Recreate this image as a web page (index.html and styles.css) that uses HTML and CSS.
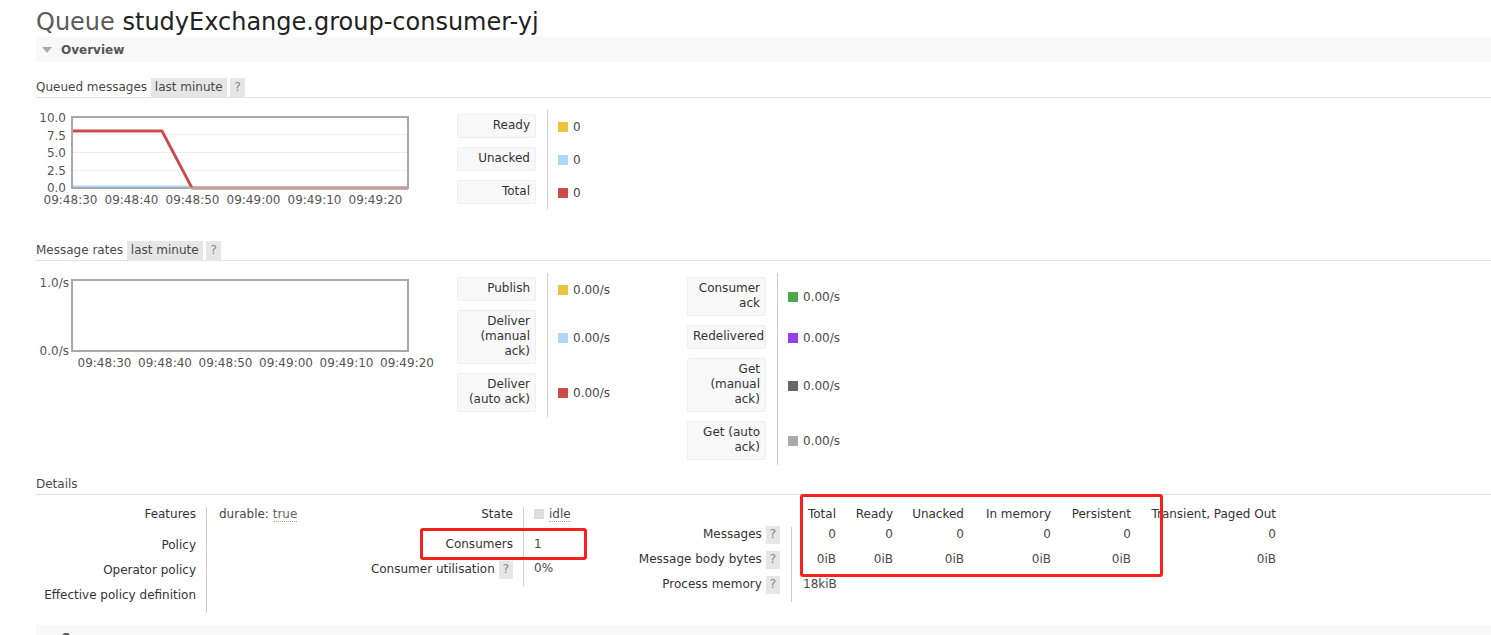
FILE: index.html
```html
<!DOCTYPE html>
<html>
<head>
<meta charset="utf-8">
<title>Queue studyExchange.group-consumer-yj</title>
<link rel="stylesheet" href="styles.css">
</head>
<body>
<div class="page">
  <h1 class="title"><span class="title-kind">Queue</span> <span class="title-name">studyExchange.group-consumer-yj</span></h1>

  <div class="section-bar"><span class="tri"></span><span class="section-name">Overview</span></div>

  <div class="hdr hdr-first">Queued messages <span class="badge">last minute</span> <span class="badge help">?</span></div>
  <div class="chart-row">
    <div class="chart">
      <svg width="421" height="100" viewBox="0 0 421 100">
        <line x1="36" y1="24.75" x2="372" y2="24.75" class="grid"/>
        <line x1="36" y1="42.5" x2="372" y2="42.5" class="grid"/>
        <line x1="36" y1="60.25" x2="372" y2="60.25" class="grid"/>
        <polyline points="36,77 156,77" class="ln-blue"/>
        <polyline points="36,21 126,21 156,78 372,78" class="ln-red"/>
        <rect x="36" y="7" width="336" height="71" class="frame"/>
        <text x="30" y="8" class="ax ax-y">10.0</text>
        <text x="30" y="25.5" class="ax ax-y">7.5</text>
        <text x="30" y="43" class="ax ax-y">5.0</text>
        <text x="30" y="60.5" class="ax ax-y">2.5</text>
        <text x="30" y="78" class="ax ax-y">0.0</text>
        <text x="34.5" y="90" class="ax ax-x">09:48:30</text>
        <text x="95.5" y="90" class="ax ax-x">09:48:40</text>
        <text x="156.5" y="90" class="ax ax-x">09:48:50</text>
        <text x="217.5" y="90" class="ax ax-x">09:49:00</text>
        <text x="278.5" y="90" class="ax ax-x">09:49:10</text>
        <text x="339.5" y="90" class="ax ax-x">09:49:20</text>
      </svg>
    </div>
    <div class="legend">
      <div class="lg-label"><span class="lg-box">Ready</span></div>
      <div class="lg-value"><span class="sw sw-ready"></span>0</div>
      <div class="lg-label"><span class="lg-box">Unacked</span></div>
      <div class="lg-value"><span class="sw sw-unacked"></span>0</div>
      <div class="lg-label"><span class="lg-box">Total</span></div>
      <div class="lg-value"><span class="sw sw-total"></span>0</div>
    </div>
  </div>

  <div class="hdr hdr-rates">Message rates <span class="badge">last minute</span> <span class="badge help">?</span></div>
  <div class="chart-row chart-row-rates">
    <div class="chart">
      <svg width="421" height="100" viewBox="0 0 421 100">
        <rect x="36" y="7" width="336" height="71" class="frame"/>
        <text x="33" y="10" class="ax ax-y">1.0/s</text>
        <text x="33" y="78" class="ax ax-y">0.0/s</text>
        <text x="68.5" y="90" class="ax ax-x">09:48:30</text>
        <text x="129" y="90" class="ax ax-x">09:48:40</text>
        <text x="189.5" y="90" class="ax ax-x">09:48:50</text>
        <text x="250" y="90" class="ax ax-x">09:49:00</text>
        <text x="310.5" y="90" class="ax ax-x">09:49:10</text>
        <text x="371" y="90" class="ax ax-x">09:49:20</text>
      </svg>
    </div>
    <div class="legend legend-rates1">
      <div class="lg-label"><span class="lg-box">Publish</span></div>
      <div class="lg-value"><span class="sw sw-ready"></span>0.00/s</div>
      <div class="lg-label"><span class="lg-box">Deliver<br>(manual<br>ack)</span></div>
      <div class="lg-value"><span class="sw sw-unacked"></span>0.00/s</div>
      <div class="lg-label"><span class="lg-box">Deliver<br>(auto ack)</span></div>
      <div class="lg-value"><span class="sw sw-total"></span>0.00/s</div>
    </div>
    <div class="legend legend-rates2">
      <div class="lg-label"><span class="lg-box">Consumer<br>ack</span></div>
      <div class="lg-value"><span class="sw sw-ack"></span>0.00/s</div>
      <div class="lg-label"><span class="lg-box">Redelivered</span></div>
      <div class="lg-value"><span class="sw sw-redeliver"></span>0.00/s</div>
      <div class="lg-label"><span class="lg-box">Get<br>(manual<br>ack)</span></div>
      <div class="lg-value"><span class="sw sw-getm"></span>0.00/s</div>
      <div class="lg-label"><span class="lg-box">Get (auto<br>ack)</span></div>
      <div class="lg-value"><span class="sw sw-geta"></span>0.00/s</div>
    </div>
  </div>

  <div class="hdr hdr-details">Details</div>
  <div class="details">
    <div class="dt dt1">
      <div class="k r1">Features</div><div class="v r1">durable: <span class="abbr">true</span></div>
      <div class="k r2">Policy</div><div class="v r2"></div>
      <div class="k r2">Operator policy</div><div class="v r2"></div>
      <div class="k r2">Effective policy definition</div><div class="v r2"></div>
    </div>
    <div class="dt dt2">
      <div class="k s1">State</div><div class="v s1"><span class="state-sq"></span><span class="abbr abbr-idle">idle</span></div>
      <div class="k s2">Consumers</div><div class="v s2">1</div>
      <div class="k s3">Consumer utilisation <span class="badge help">?</span></div><div class="v s3">0%</div>
    </div>
    <div class="dt dt3">
      <div class="k h"></div>
      <div class="n h c1">Total</div>
      <div class="n h c2">Ready</div>
      <div class="n h c3">Unacked</div>
      <div class="n h c4">In memory</div>
      <div class="n h c5">Persistent</div>
      <div class="n h c6">Transient, Paged Out</div>

      <div class="k m">Messages <span class="badge help">?</span></div>
      <div class="n m c1 first">0</div>
      <div class="n m c2">0</div>
      <div class="n m c3">0</div>
      <div class="n m c4">0</div>
      <div class="n m c5">0</div>
      <div class="n m c6">0</div>

      <div class="k m">Message body bytes <span class="badge help">?</span></div>
      <div class="n m c1 first">0iB</div>
      <div class="n m c2">0iB</div>
      <div class="n m c3">0iB</div>
      <div class="n m c4">0iB</div>
      <div class="n m c5">0iB</div>
      <div class="n m c6">0iB</div>

      <div class="k m">Process memory <span class="badge help">?</span></div>
      <div class="n m first span-all">18kiB</div>
    </div>
    <div class="mark mark-consumers"></div>
    <div class="mark mark-messages"></div>
  </div>

  <div class="section-bar section-consumers"><span class="tri"></span><span class="section-name">Consumers</span></div>
</div>
</body>
</html>
```
FILE: styles.css
```css
html, body {
  margin: 0;
  padding: 0;
  background: #fff;
  overflow: hidden;
}
body {
  font-family: "DejaVu Sans", Verdana, sans-serif;
  font-size: 12px;
  color: #484848;
  width: 1491px;
  height: 635px;
}
.page {
  padding-left: 36px;
}
.title {
  margin: 0;
  padding-top: 7px;
  height: 30px;
  line-height: 30px;
  font-size: 24px;
  font-weight: normal;
  white-space: nowrap;
}
.title-kind { color: #5a5a5a; }
.title-name { color: #222; }

.section-bar {
  height: 25px;
  background: #f8f8f8;
  display: flex;
  align-items: center;
  padding-left: 6px;
}
.tri {
  width: 0;
  height: 0;
  border-left: 5px solid transparent;
  border-right: 5px solid transparent;
  border-top: 6px solid #aaa;
  margin-right: 9px;
}
.section-name {
  font-weight: bold;
  color: #555;
}
.section-consumers {
  margin-top: 12px;
}

.hdr {
  height: 19px;
  line-height: 19px;
  border-bottom: 1px solid #e2e2e2;
  color: #484848;
  white-space: nowrap;
}
.hdr-first { margin-top: 16px; }
.hdr-rates { margin-top: 31px; }
.hdr-details { margin-top: 10px; }
.badge {
  display: inline-block;
  background: #e6e6e6;
  padding: 0 4px;
  color: #484848;
}
.badge.help {
  color: #888;
  padding: 0 4px;
  line-height: 19px;
}

.chart-row {
  display: flex;
  margin-top: 12px;
}
.chart {
  width: 421px;
  flex: none;
}
.chart svg { display: block; }
.frame {
  fill: none;
  stroke: #a9a9a9;
  stroke-width: 2;
}
.grid {
  stroke: #ececec;
  stroke-width: 1;
}
.ln-red {
  fill: none;
  stroke: #cb4b4b;
  stroke-width: 2.8;
  stroke-linejoin: round;
}
.ln-blue {
  fill: none;
  stroke: #afd8f8;
  stroke-width: 3;
}
.ax {
  font-family: "DejaVu Sans", Verdana, sans-serif;
  font-size: 12px;
  fill: #545454;
  dominant-baseline: central;
}
.ax-y { text-anchor: end; }
.ax-x { text-anchor: middle; }

.legend {
  display: grid;
  grid-template-columns: 79px auto;
  column-gap: 11px;
  align-content: start;
}
.legend-rates1 { width: 230px; }
.lg-label {
  padding: 4px 0 5px;
}
.lg-box {
  display: block;
  box-sizing: border-box;
  background: #f8f8f8;
  border: 1px solid #eee;
  border-radius: 2px;
  padding: 3px 5px 4px;
  line-height: 15px;
  text-align: right;
  color: #333;
}
.lg-value {
  border-left: 1px solid #ccc;
  padding-left: 10px;
  display: flex;
  align-items: center;
  color: #484848;
}
.sw {
  width: 10px;
  height: 10px;
  margin-right: 5px;
  flex: none;
}
.sw-ready { background: #edc240; }
.sw-unacked { background: #afd8f8; }
.sw-total { background: #cb4b4b; }
.sw-ack { background: #4da74d; }
.sw-redeliver { background: #9440ed; }
.sw-getm { background: #666; }
.sw-geta { background: #aaa; }

.details {
  position: relative;
  display: flex;
  margin-top: 12px;
  line-height: 15px;
}
.dt {
  display: grid;
  align-content: start;
}
.dt .k {
  text-align: right;
  padding-right: 10px;
  color: #333;
  white-space: nowrap;
}
.dt .v {
  border-left: 1px solid #ccc;
  white-space: nowrap;
}
.dt1 { grid-template-columns: 170px 124px; }
.dt1 .v { padding-left: 12px; }
.dt1 .r1 { height: 31px; }
.dt1 .r2 { height: 25px; }
.abbr {
  color: #666;
  border-bottom: 1px dotted #aaa;
}
.dt2 { grid-template-columns: 193px 77px; }
.dt2 .v { padding-left: 10px; }
.dt2 .s1 { height: 30px; }
.dt2 .s2 { height: 24px; }
.dt2 .s3 { height: 25px; }
.state-sq {
  display: inline-block;
  width: 10px;
  height: 10px;
  background: #ddd;
  margin-right: 5px;
  vertical-align: -1px;
}
.abbr-idle { color: #484848; }
.dt .badge.help { line-height: 15px; padding: 1px 4px 2px; }

.dt3 { grid-template-columns: 191px 45px 57px 71px 87px 80px 145px; }
.dt3 .k { padding-right: 11px; }
.dt3 .h { height: 20px; }
.dt3 .m { height: 25px; }
.dt3 .m.k { margin-top: -1px; }
.dt3 .n {
  text-align: right;
  white-space: nowrap;
  box-sizing: border-box;
  color: #484848;
}
.dt3 .h.n { color: #333; }
.dt3 .first { border-left: 1px solid #ccc; }
.dt3 .span-all {
  grid-column: 2 / span 6;
  text-align: left;
  padding-left: 11px;
}

.mark {
  position: absolute;
  border: 3px solid #f5211d;
  border-radius: 3px;
  box-sizing: border-box;
}
.mark-consumers {
  left: 384px;
  top: 21px;
  width: 167px;
  height: 32px;
}
.mark-messages {
  left: 764px;
  top: -13px;
  width: 363px;
  height: 83px;
}
```
